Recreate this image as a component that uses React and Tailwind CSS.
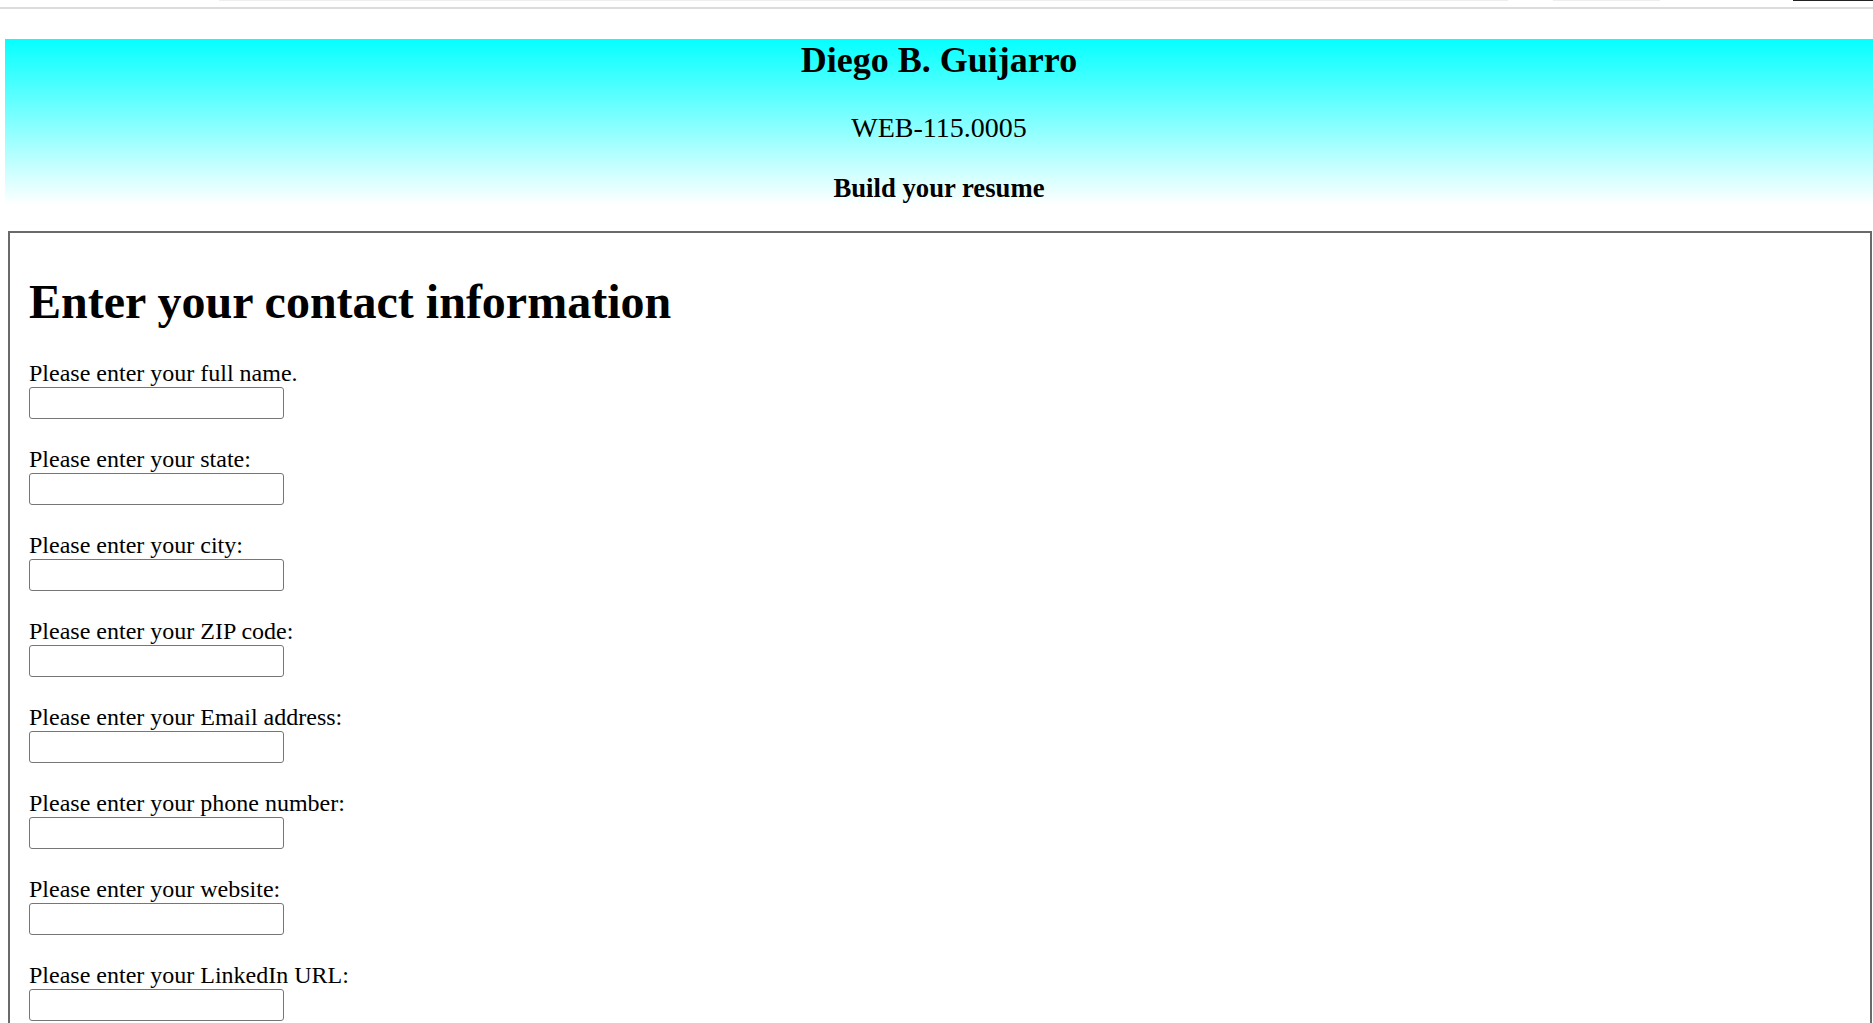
import React from "react";

const fields = [
  "Please enter your full name.",
  "Please enter your state:",
  "Please enter your city:",
  "Please enter your ZIP code:",
  "Please enter your Email address:",
  "Please enter your phone number:",
  "Please enter your website:",
  "Please enter your LinkedIn URL:",
];

export default function App() {
  return (
    <div className="w-[1873px] h-[1023px] overflow-hidden bg-white text-black font-['Liberation_Serif','Times_New_Roman',serif]">
      <div className="flex h-px">
        <div className="w-[219px]" />
        <div className="w-[1289px] bg-[#eeeeee]" />
        <div className="w-[45px]" />
        <div className="w-[107px] bg-[#eeeeee]" />
        <div className="flex-1" />
        <div className="w-[80px] bg-[#222222]" />
      </div>
      <div className="mt-[6px] h-[2px] bg-[#dcdcdc]" />
      <header className="mt-[30px] ml-[5px] h-[166px] bg-[linear-gradient(to_bottom,#05ffff,#ffffff)] text-center pt-[1px]">
        <h1 className="text-[36px] font-bold leading-[41px]">Diego B. Guijarro</h1>
        <p className="mt-[31px] text-[28px] leading-[32px]">WEB-115.0005</p>
        <h3 className="mt-[29px] text-[26.7px] font-bold leading-[31px]">Build your resume</h3>
      </header>
      <main className="mt-[26px] ml-[8px] w-[1864px] h-[900px] border-2 border-[#6a6a6a] pl-[19px] pt-[41px]">
        <h2 className="text-[48px] font-bold leading-[55px]">Enter your contact information</h2>
        <div className="mt-[30px] flex flex-col">
          {fields.map((f) => (
            <div key={f} className="flex flex-col mb-[26px]">
              <label className="text-[24px] leading-[28px]">{f}</label>
              <input
                type="text"
                className="w-[255px] h-[32px] border border-[#767676] rounded-[3px] bg-white"
              />
            </div>
          ))}
        </div>
      </main>
    </div>
  );
}
